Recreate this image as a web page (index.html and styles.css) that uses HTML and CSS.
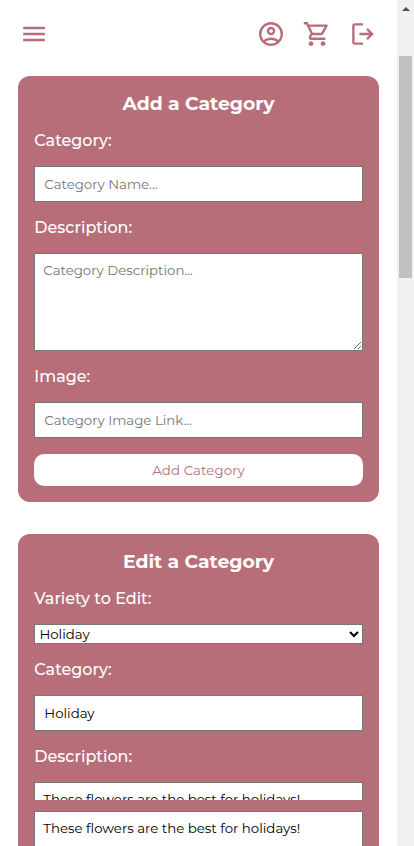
FILE: index.html
```html
<!DOCTYPE html>
<html lang="en">
<head>
<meta charset="utf-8">
<meta name="viewport" content="width=device-width, initial-scale=1">
<title>Categories</title>
<link rel="stylesheet" href="styles.css">
</head>
<body>
<div class="page">
  <header class="topbar">
    <svg class="icon menu" viewBox="-20 -980 1000 1000"><path d="M120-240v-80h720v80H120Zm0-200v-80h720v80H120Zm0-200v-80h720v80H120Z"/></svg>
    <svg class="icon" viewBox="-20 -980 1000 1000"><path d="M234-276q51-39 114-61.5T480-360q69 0 132 22.5T726-276q35-41 54.5-93T800-480q0-133-93.5-226.5T480-800q-133 0-226.5 93.5T160-480q0 59 19.5 111t54.5 93Zm246-164q-59 0-99.5-40.5T340-580q0-59 40.5-99.5T480-720q59 0 99.5 40.5T620-580q0 59-40.5 99.5T480-440Zm0 360q-83 0-156-31.5T197-197q-54-54-85.5-127T80-480q0-83 31.5-156T197-763q54-54 127-85.5T480-880q83 0 156 31.5T763-763q54 54 85.5 127T880-480q0 83-31.5 156T763-197q-54 54-127 85.5T480-80Zm0-80q53 0 100-15.5t86-44.5q-39-29-86-44.5T480-280q-53 0-100 15.5T294-220q39 29 86 44.5T480-160Zm0-360q26 0 43-17t17-43q0-26-17-43t-43-17q-26 0-43 17t-17 43q0 26 17 43t43 17Z"/></svg>
    <svg class="icon" viewBox="-20 -980 1000 1000"><path d="M280-80q-33 0-56.5-23.5T200-160q0-33 23.5-56.5T280-240q33 0 56.5 23.5T360-160q0 33-23.5 56.5T280-80Zm400 0q-33 0-56.5-23.5T600-160q0-33 23.5-56.5T680-240q33 0 56.5 23.5T760-160q0 33-23.5 56.5T680-80ZM246-720l96 200h280l110-200H246Zm-38-80h590q23 0 35 20.5t1 41.5L692-482q-11 20-29.5 31T622-440H324l-44 80h480v80H280q-45 0-68-39.5t-2-78.5l54-98-144-304H40v-80h130l38 80Z"/></svg>
    <svg class="icon" viewBox="-20 -980 1000 1000"><path d="M200-120q-33 0-56.5-23.5T120-200v-560q0-33 23.5-56.5T200-840h280v80H200v560h280v80H200Zm440-160-55-58 102-102H360v-80h327L585-622l55-58 200 200-200 200Z"/></svg>
  </header>
  <main class="cards">
    <form class="card">
      <h3 class="title">Add a Category</h3>
      <label class="label" for="add-name">Category:</label>
      <input class="field" id="add-name" type="text" placeholder="Category Name...">
      <label class="label" for="add-desc">Description:</label>
      <textarea class="field area" id="add-desc" placeholder="Category Description..."></textarea>
      <label class="label" for="add-image">Image:</label>
      <input class="field" id="add-image" type="text" placeholder="Category Image Link...">
      <button class="submit" type="button">Add Category</button>
    </form>
    <form class="card">
      <h3 class="title">Edit a Category</h3>
      <label class="label" for="edit-variety">Variety to Edit:</label>
      <select class="picker" id="edit-variety"><option>Holiday</option></select>
      <label class="label" for="edit-name">Category:</label>
      <input class="field" id="edit-name" type="text" value="Holiday">
      <label class="label" for="edit-desc">Description:</label>
      <div class="cutoff"><textarea class="field area" id="edit-desc">These flowers are the best for holidays!</textarea></div>
      <textarea class="field area" aria-label="Description">These flowers are the best for holidays!</textarea>
    </form>
  </main>
</div>
<div class="scrollbar">
  <svg class="arrow" viewBox="0 0 8 4"><path d="M0 4 4 0l4 4Z"/></svg>
  <div class="thumb"></div>
</div>
</body>
</html>
```
FILE: styles.css
```css
* { box-sizing: border-box; }
body {
  margin: 0;
  height: 846px;
  overflow: hidden;
  display: flex;
  background: #fff;
  font-family: Montserrat, Inter, sans-serif;
}
.page { width: 397px; height: 846px; overflow: hidden; }
.topbar {
  height: 68px;
  padding: 0 19px;
  display: flex;
  align-items: center;
  gap: 16px;
}
.icon { width: 30px; height: 30px; fill: #b76e79; flex: none; }
.menu { margin-right: auto; }
.cards {
  padding: 8px 18px 0;
  display: flex;
  flex-direction: column;
  gap: 32px;
}
.card {
  display: flex;
  flex-direction: column;
  padding: 16px;
  border-radius: 12px;
  background: #b76e79;
  color: #fff;
}
.title {
  margin: 0;
  height: 23px;
  line-height: 23px;
  font-size: 18.8px;
  font-weight: 700;
  text-align: center;
}
.label {
  height: 20px;
  margin: 16px 0 15px;
  padding-left: 0.3px;
  line-height: 20px;
  font-size: 16px;
  font-weight: 500;
}
.field {
  display: block;
  width: 100%;
  height: 36px;
  margin: 0;
  padding: 1px 9.3px;
  border: 1px solid #767676;
  border-radius: 0;
  outline: 0;
  background: #fff;
  color: #000;
  font: 400 13.333px/16px Montserrat, Inter, sans-serif;
}
.field::placeholder { color: #757575; }
.area { height: 98px; padding: 8px 8.3px; resize: vertical; flex: none; }
.submit {
  height: 32px;
  margin: 16px 0 0;
  padding: 0;
  border: 0;
  border-radius: 10px;
  background: #fff;
  color: #b76e79;
  font: 400 13.333px Montserrat, Inter, sans-serif;
  letter-spacing: 0.1px;
}
.picker {
  height: 20px;
  padding: 0 0 0 0.4px;
  border: 1px solid #767676;
  border-radius: 0;
  background: #fff;
  color: #000;
  font: 400 13.333px Montserrat, Inter, sans-serif;
}
.cutoff { height: 18px; margin-bottom: 11px; overflow: hidden; }
.scrollbar {
  width: 17px;
  height: 846px;
  padding-top: 7px;
  background: #f1f1f1;
  display: flex;
  flex-direction: column;
  align-items: center;
}
.arrow { width: 8px; height: 4px; fill: #505050; margin-bottom: 45px; }
.thumb { width: 13px; height: 222px; background: #c1c1c1; }
```
